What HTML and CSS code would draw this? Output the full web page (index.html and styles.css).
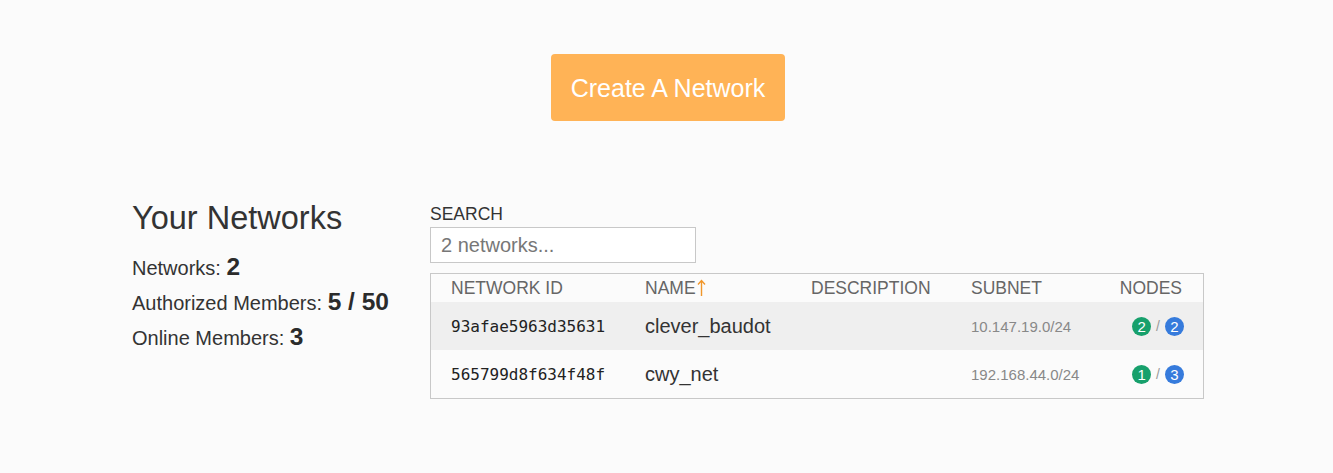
FILE: index.html
```html
<!DOCTYPE html>
<html>
<head>
<meta charset="utf-8">
<link rel="stylesheet" href="styles.css">
</head>
<body>
<div class="top">
  <button class="create-btn">Create A Network</button>
</div>
<section class="networks">
  <div class="summary">
    <h1 class="title">Your Networks</h1>
    <div class="stat">Networks: <b>2</b></div>
    <div class="stat">Authorized Members: <b>5 / 50</b></div>
    <div class="stat">Online Members: <b>3</b></div>
  </div>
  <div class="list">
    <label class="search-label">SEARCH</label>
    <input class="search" type="text" placeholder="2 networks...">
    <div class="table">
      <div class="row head">
        <div class="cell">NETWORK ID</div>
        <div class="cell">NAME<svg class="arrow" width="9" height="17" viewBox="0 0 9 17" aria-label="sorted ascending"><path d="M4.5 1.5V17M1 5.5L4.5 1.5L8 5.5" fill="none" stroke="#f0962a" stroke-width="1.4"/></svg></div>
        <div class="cell">DESCRIPTION</div>
        <div class="cell">SUBNET</div>
        <div class="cell nodes head-nodes">NODES</div>
      </div>
      <div class="row alt">
        <div class="cell id">93afae5963d35631</div>
        <div class="cell name">clever_baudot</div>
        <div class="cell"></div>
        <div class="cell subnet">10.147.19.0/24</div>
        <div class="cell nodes"><span class="badge green">2</span><span class="slash">/</span><span class="badge blue">2</span></div>
      </div>
      <div class="row">
        <div class="cell id">565799d8f634f48f</div>
        <div class="cell name">cwy_net</div>
        <div class="cell"></div>
        <div class="cell subnet">192.168.44.0/24</div>
        <div class="cell nodes"><span class="badge green">1</span><span class="slash">/</span><span class="badge blue">3</span></div>
      </div>
    </div>
  </div>
</section>
</body>
</html>
```
FILE: styles.css
```css
html, body {
  margin: 0;
  padding: 0;
  background: #fbfbfb;
  font-family: "Liberation Sans", Arial, sans-serif;
  color: #333;
}
.top {
  display: flex;
  justify-content: center;
  padding-top: 54px;
  padding-left: 3px;
}
.create-btn {
  width: 234px;
  height: 67px;
  border: none;
  border-radius: 4px;
  background: #ffb356;
  color: #fff;
  font-family: "Liberation Sans", Arial, sans-serif;
  font-size: 25px;
  padding: 2px 0 0;
}
.networks {
  display: flex;
  padding-left: 132px;
  margin-top: 78px;
}
.summary {
  width: 298px;
}
.title {
  margin: 0 0 14px;
  font-size: 32.5px;
  font-weight: normal;
  line-height: 38.4px;
  color: #333;
}
.stat {
  font-size: 20px;
  line-height: 34.8px;
  color: #333;
}
.stat b {
  font-size: 24.5px;
  line-height: 1;
  color: #2b2b2b;
}
.list {
  padding-top: 5px;
  display: flex;
  flex-direction: column;
  align-items: flex-start;
}
.search-label {
  font-size: 17.5px;
  line-height: 20.4px;
  color: #333;
  margin-bottom: 3px;
}
.search {
  box-sizing: border-box;
  width: 266px;
  height: 36px;
  border: 1px solid #c8c8c8;
  background: #fff;
  padding: 0 10px;
  font-family: "Liberation Sans", Arial, sans-serif;
  font-size: 20px;
  color: #333;
  outline: none;
}
.search::placeholder {
  color: #777;
}
.table {
  margin-top: 10px;
  width: 774px;
  box-sizing: border-box;
  border: 1px solid #c8c8c8;
}
.row {
  display: grid;
  grid-template-columns: 194px 166px 160px 1fr auto;
  height: 48px;
  align-items: center;
}
.row.head {
  height: 28px;
}
.row.alt {
  background: #efefef;
}
.cell {
  padding: 0 20px;
  white-space: nowrap;
}
.head .cell {
  font-size: 17.5px;
  color: #666;
}
.arrow {
  vertical-align: -2px;
  margin-left: 1px;
}
.id {
  font-family: "DejaVu Sans Mono", monospace;
  font-size: 16px;
  color: #222;
}
.name {
  font-size: 20px;
  color: #333;
}
.subnet {
  font-size: 15px;
  color: #888;
}
.nodes {
  display: flex;
  align-items: center;
  justify-content: flex-end;
  padding-right: 19px;
}
.head-nodes {
  padding-right: 21px;
}
.badge {
  display: inline-flex;
  align-items: center;
  justify-content: center;
  width: 19px;
  height: 19px;
  border-radius: 50%;
  color: #fff;
  font-size: 15px;
}
.green {
  background: #17a06c;
}
.blue {
  background: #367bdc;
}
.slash {
  color: #999;
  font-size: 14px;
  margin: 0 5px;
}
```
